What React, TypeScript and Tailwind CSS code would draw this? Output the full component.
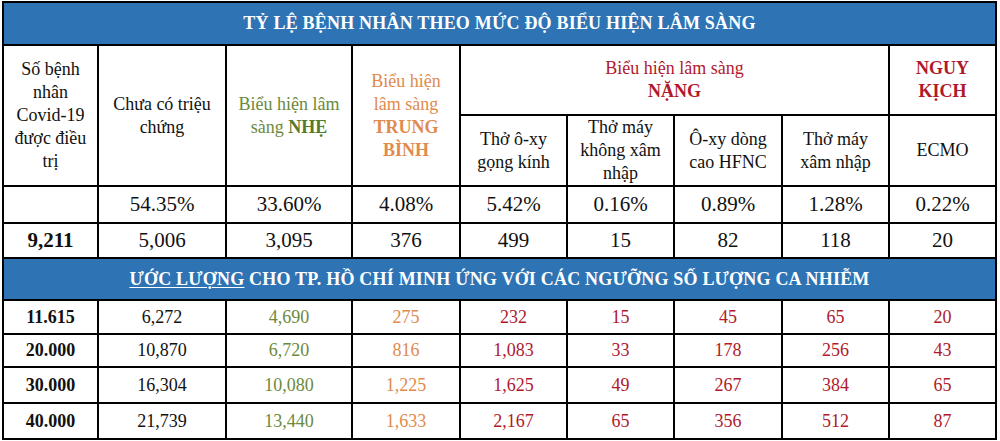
const serif = "font-['Liberation_Serif','DejaVu_Serif',serif]";

const green = "text-[#6b8a3c]";
const orange = "text-[#e08b4d]";
const red = "text-[#b0192c]";

const cell = "border-2 border-black text-center align-middle p-0";
const head = "text-[18px] leading-[23px]";

const estimates = [
  ["11.615", "6,272", "4,690", "275", "232", "15", "45", "65", "20"],
  ["20.000", "10,870", "6,720", "816", "1,083", "33", "178", "256", "43"],
  ["30.000", "16,304", "10,080", "1,225", "1,625", "49", "267", "384", "65"],
  ["40.000", "21,739", "13,440", "1,633", "2,167", "65", "356", "512", "87"],
];

const rowHeights = ["h-[34px]", "h-[33px]", "h-[36px]", "h-[36px]"];

export default function App() {
  return (
    <div className={`w-[1000px] h-[441px] bg-white pl-[2px] pt-[1px] ${serif}`}>
      <table className="border-collapse table-fixed w-[995px] border-2 border-black text-[#111]">
        <colgroup>
          <col className="w-[95px]" />
          <col className="w-[128px]" />
          <col className="w-[126px]" />
          <col className="w-[108px]" />
          <col className="w-[107px]" />
          <col className="w-[107px]" />
          <col className="w-[108px]" />
          <col className="w-[107px]" />
          <col className="w-[107px]" />
        </colgroup>
        <tbody>
          {/* title band */}
          <tr className="h-[43px]">
            <td colSpan={9} className={`${cell} bg-[#2e74b5] text-white font-bold text-[18px] tracking-[0.2px]`}>
              TỶ LỆ BỆNH NHÂN THEO MỨC ĐỘ BIỂU HIỆN LÂM SÀNG
            </td>
          </tr>

          {/* header row 1 */}
          <tr className="h-[70px]">
            <td rowSpan={2} className={`${cell} ${head} leading-[22.5px]`}>
              Số bệnh
              <br />
              nhân
              <br />
              Covid-19
              <br />
              được điều
              <br />
              trị
            </td>
            <td rowSpan={2} className={`${cell} ${head} px-3`}>
              Chưa có triệu chứng
            </td>
            <td rowSpan={2} className={`${cell} ${head} px-2 ${green}`}>
              Biểu hiện lâm
              <br />
              sàng <span className="font-bold text-[#557a2a]">NHẸ</span>
            </td>
            <td rowSpan={2} className={`${cell} ${head} px-3 ${orange}`}>
              Biểu hiện
              <br />
              lâm sàng
              <br />
              <span className="font-bold">TRUNG</span>
              <br />
              <span className="font-bold">BÌNH</span>
            </td>
            <td colSpan={4} className={`${cell} ${head} ${red}`}>
              Biểu hiện lâm sàng
              <br />
              <span className="font-bold">NẶNG</span>
            </td>
            <td className={`${cell} ${head} font-bold ${red}`}>
              NGUY
              <br />
              KỊCH
            </td>
          </tr>

          {/* header row 2 */}
          <tr className="h-[69px]">
            <td className={`${cell} ${head} px-3`}>Thở ô-xy gọng kính</td>
            <td className={`${cell} ${head} px-2`}>
              Thở máy
              <br />
              không xâm
              <br />
              nhập
            </td>
            <td className={`${cell} ${head} px-3`}>Ô-xy dòng cao HFNC</td>
            <td className={`${cell} ${head} px-4`}>Thở máy xâm nhập</td>
            <td className={`${cell} ${head}`}>ECMO</td>
          </tr>

          {/* percentages */}
          <tr className="h-[37px] text-[21px]">
            <td className={cell}></td>
            {["54.35%", "33.60%", "4.08%", "5.42%", "0.16%", "0.89%", "1.28%", "0.22%"].map((v) => (
              <td key={v} className={cell}>
                {v}
              </td>
            ))}
          </tr>

          {/* counts */}
          <tr className="h-[35px] text-[21px]">
            <td className={`${cell} font-bold`}>9,211</td>
            {["5,006", "3,095", "376", "499", "15", "82", "118", "20"].map((v, i) => (
              <td key={i} className={cell}>
                {v}
              </td>
            ))}
          </tr>

          {/* estimate band */}
          <tr className="h-[42px]">
            <td colSpan={9} className={`${cell} bg-[#2e74b5] text-white font-bold text-[18px] tracking-[0.2px]`}>
              <span className="underline underline-offset-2 decoration-1">ƯỚC LƯỢNG</span> CHO TP. HỒ CHÍ MINH ỨNG VỚI CÁC
              NGƯỠNG SỐ LƯỢNG CA NHIỄM
            </td>
          </tr>

          {estimates.map((row, r) => (
            <tr key={row[0]} className={`${rowHeights[r]} text-[18px]`}>
              {row.map((v, i) => {
                const color =
                  i === 0 ? "font-bold" : i === 1 ? "" : i === 2 ? green : i === 3 ? orange : red;
                return (
                  <td key={i} className={`${cell} ${color}`}>
                    {v}
                  </td>
                );
              })}
            </tr>
          ))}
        </tbody>
      </table>
    </div>
  );
}
